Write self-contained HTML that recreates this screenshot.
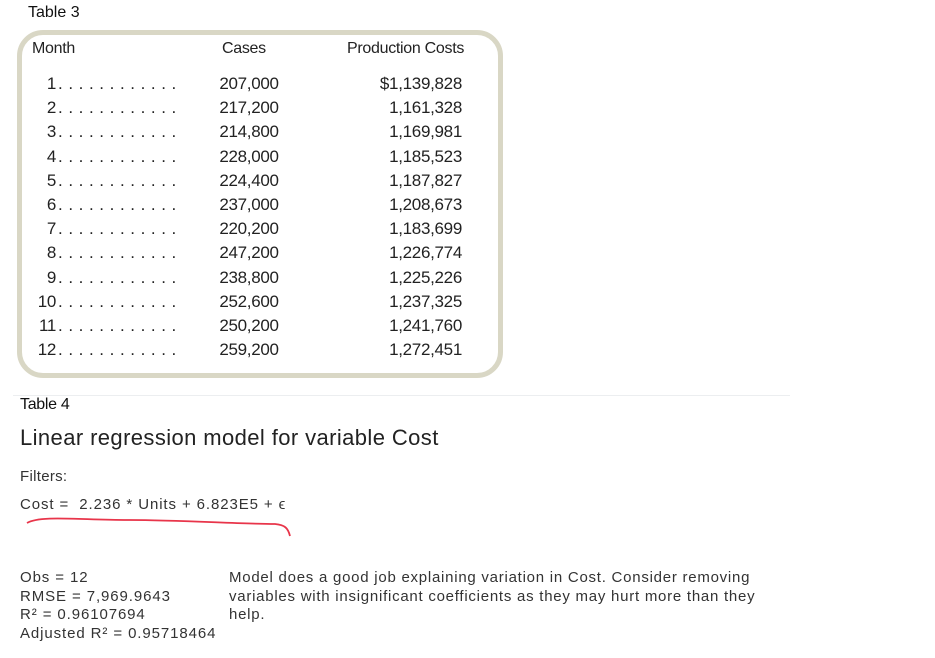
<!DOCTYPE html>
<html><head><style>
body{margin:0;width:935px;height:658px;background:#fff;position:relative;font-family:"Liberation Sans",sans-serif;overflow:hidden}
.a{position:absolute;white-space:nowrap}
.box{position:absolute;left:17px;top:30px;width:476px;height:338px;border:5px solid #d9d7c5;border-radius:26px}
.t{color:#222;font-size:17px;letter-spacing:-0.3px}
.r{text-align:right}
</style></head><body>
<div class="a" style="left:28px;top:4px;font-size:16px;color:#111">Table 3</div>
<div class="box"></div>
<div class="a t" style="left:32px;top:40px;font-size:16px">Month</div>
<div class="a t" style="left:222px;top:40px;font-size:16px">Cases</div>
<div class="a t" style="left:347px;top:40px;font-size:16px">Production Costs</div>
<div id="rows"></div>
<script>
var m=["1","2","3","4","5","6","7","8","9","10","11","12"],
c=["207,000","217,200","214,800","228,000","224,400","237,000","220,200","247,200","238,800","252,600","250,200","259,200"],
p=["$1,139,828","1,161,328","1,169,981","1,185,523","1,187,827","1,208,673","1,183,699","1,226,774","1,225,226","1,237,325","1,241,760","1,272,451"],h="";
for(var i=0;i<12;i++){var y=74+i*24.2;
h+='<div class="a t r" style="left:18px;width:38px;top:'+y+'px">'+m[i]+'</div>';
h+='<div class="a t" style="left:58px;top:'+y+'px;letter-spacing:5.6px">............</div>';
h+='<div class="a t" style="left:199px;width:100px;text-align:center;top:'+y+'px">'+c[i]+'</div>';
h+='<div class="a t r" style="left:340px;width:122px;top:'+y+'px">'+p[i]+'</div>';}
document.getElementById('rows').innerHTML=h;
</script>
<div class="a" style="left:13px;top:395px;width:777px;height:1px;background:#eceef0"></div>
<div class="a" style="left:20px;top:396px;font-size:16px;color:#111;letter-spacing:-0.3px">Table 4</div>
<div class="a" style="left:20px;top:425px;font-size:22px;color:#222;letter-spacing:0.4px">Linear regression model for variable Cost</div>
<div class="a" style="left:20px;top:468px;font-size:15px;color:#333;letter-spacing:0.3px">Filters:</div>
<div class="a" style="left:20px;top:496px;font-size:15px;color:#333;letter-spacing:0.9px">Cost =&nbsp; 2.236 * Units + 6.823E5 + ϵ</div>
<svg class="a" style="left:0;top:510px" width="320" height="40"><path d="M27 13 C40 5,80 10,130 10 S240 14,275 14 C285 15,288 18,290 26" stroke="#e8354a" stroke-width="1.8" fill="none"/></svg>
<div class="a" style="left:20px;top:569px;font-size:15px;color:#333;line-height:18.5px;letter-spacing:0.9px">Obs = 12<br>RMSE = 7,969.9643<br>R² = 0.96107694<br>Adjusted R² = 0.95718464</div>
<div class="a" style="left:229px;top:569px;font-size:15px;color:#333;line-height:18.5px;letter-spacing:0.75px">Model does a good job explaining variation in Cost. Consider removing<br>variables with insignificant coefficients as they may hurt more than they<br>help.</div>
</body></html>
